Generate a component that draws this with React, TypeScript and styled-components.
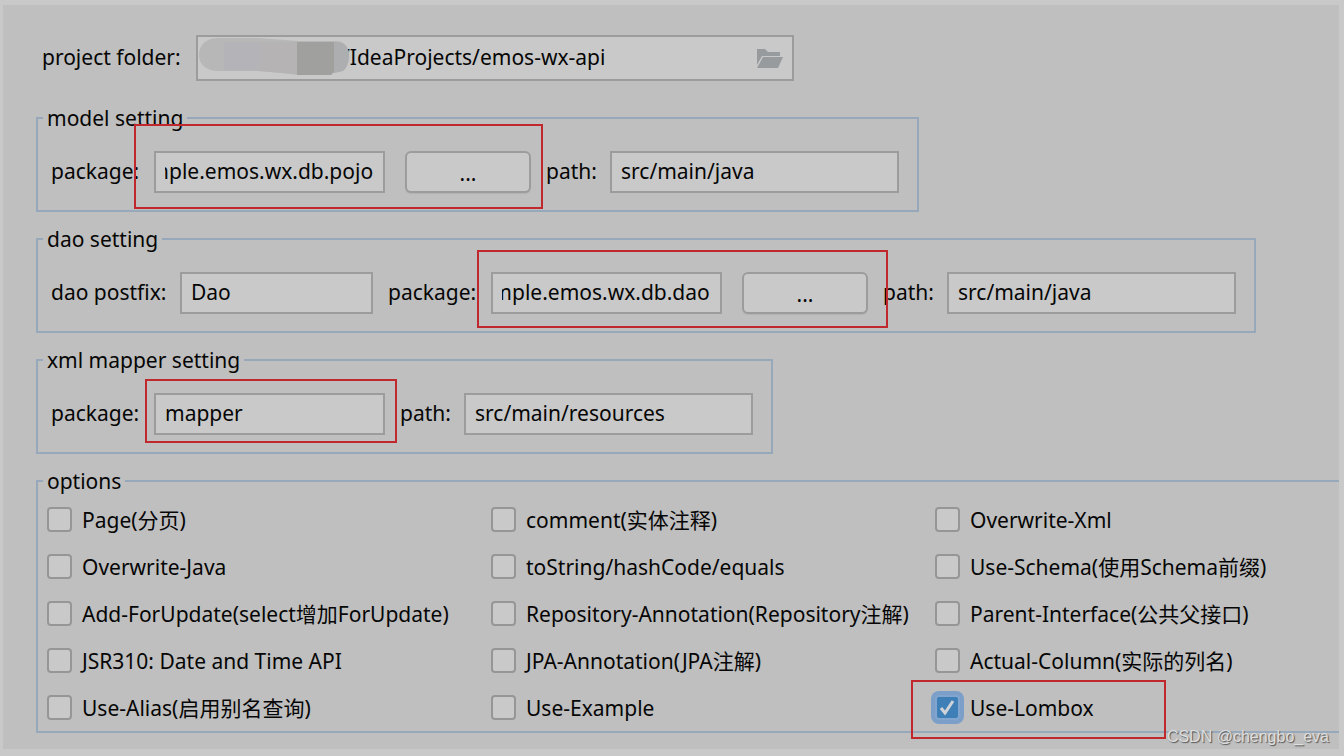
import React, { useId, useLayoutEffect, useRef } from "react";
import styled, { createGlobalStyle, css } from "styled-components";

const GlobalStyle = createGlobalStyle`
  *, *::before, *::after { box-sizing: border-box; }
  body {
    margin: 0;
    background: #c9c9c9;
    color: #060606;
    font-family: "Noto Sans", "Noto Sans CJK SC", sans-serif;
    font-size: 21px;
    line-height: 28px;
    overflow-x: hidden;
  }
  input, button { font: inherit; color: inherit; }
`;

const Page = styled.main`
  padding: 5px 5px 7px 3px;
`;

const Panel = styled.form`
  display: flex;
  flex-direction: column;
  gap: 13px;
  padding: 30px 0 16px 33px;
  background: #bfbfbf;
  overflow: hidden;
`;

const FolderRow = styled.div`
  display: flex;
  align-items: center;
  gap: 14px;
  padding-left: 6px;
  margin-bottom: 10px;
`;

const FieldLabel = styled.label<{ $width: number }>`
  flex: none;
  width: ${(p) => p.$width}px;
  padding-bottom: 2px;
  white-space: nowrap;
`;

const TextInput = styled.input<{ $width: number }>`
  flex: none;
  width: ${(p) => p.$width}px;
  height: 42px;
  padding: 0 10px 2px 9px;
  border: 2px solid #9c9c9c;
  border-radius: 0;
  background: #c9c9c9;
  outline: none;
`;

const FolderBox = styled.div`
  position: relative;
  display: flex;
  align-items: center;
  width: 598px;
  height: 46px;
  border: 2px solid #9c9c9c;
  background: #c9c9c9;
`;

const FolderInput = styled.input`
  flex: 1;
  min-width: 0;
  height: 100%;
  padding: 0 0 2px 144px;
  border: 0;
  background: none;
  outline: none;
`;

const BrowseButton = styled.button`
  display: flex;
  padding: 0;
  margin: 2px 8px 0 0;
  border: 0;
  background: none;
`;

const Redaction = styled.svg`
  position: absolute;
  left: 0;
  top: 0;
  pointer-events: none;
`;

const Group = styled.fieldset<{ $open?: boolean }>`
  margin: 0;
  min-width: 0;
  border: 2px solid #98a8bb;
  ${(p) =>
    p.$open
      ? css`
          padding: 1px 0 0 9px;
          border-right: 0;
        `
      : css`
          width: fit-content;
          padding: 19px 18px 17px 13px;
        `}
`;

const Legend = styled.legend<{ $open?: boolean }>`
  margin-left: ${(p) => (p.$open ? -4 : -8)}px;
  padding: 0 4px;
`;

const FieldRow = styled.div`
  display: flex;
  align-items: center;
  gap: 15px;
`;

const Marked = styled.div`
  position: relative;
  display: flex;
  gap: 20px;
`;

const Mark = styled.span<{ $inset: string }>`
  position: absolute;
  inset: ${(p) => p.$inset};
  border: 2px solid #c0282d;
  pointer-events: none;
  z-index: 1;
`;

const DotsButton = styled.button`
  width: 126px;
  height: 42px;
  padding: 2px 0 0;
  border: 2px solid #9c9c9c;
  border-radius: 6px;
  background: #c9c9c9;
  box-shadow: 0 1px 1px #b2b2b2;
`;

const OptionGrid = styled.div`
  display: grid;
  grid-template-columns: repeat(3, minmax(444px, 1fr));
  grid-auto-rows: 47px;
`;

const OptionCell = styled.div`
  display: flex;
  align-items: center;
`;

const OptionLabel = styled.label`
  position: relative;
  display: flex;
  align-items: center;
  gap: 10px;
  white-space: nowrap;
`;

const BoxWrap = styled.span`
  display: grid;
  width: 25px;
  height: 25px;
  & > * { grid-area: 1 / 1; }
`;

const CheckInput = styled.input`
  appearance: none;
  width: 25px;
  height: 25px;
  margin: 0;
  border: 2px solid #969696;
  border-radius: 4px;
  background: #c9c9c9;
  &:checked {
    border-color: #82a5cd;
    background: #3f7fb8;
    box-shadow: 0 0 0 4px #7b9fc9;
  }
`;

const Tick = styled.svg`
  display: none;
  pointer-events: none;
  z-index: 1;
  input:checked + & { display: block; }
`;

const Watermark = styled.div`
  position: absolute;
  right: 15px;
  top: 726px;
  font-family: "Liberation Sans", sans-serif;
  font-size: 16px;
  line-height: 22px;
  color: #dedede;
  text-shadow: 1px 1px 1px #555;
`;

type FieldProps = { label: string; value: string; labelWidth: number; width: number };

function Field({ label, value, labelWidth, width }: FieldProps) {
  const id = useId();
  return (
    <>
      <FieldLabel $width={labelWidth} htmlFor={id}>{label}</FieldLabel>
      <TextInput $width={width} id={id} defaultValue={value} />
    </>
  );
}

type PackageProps = { value: string; inset: string; browse?: boolean };

function PackageField({ value, inset, browse }: PackageProps) {
  const id = useId();
  const ref = useRef<HTMLInputElement>(null);
  // Long package names show their tail, the part that differs between projects.
  useLayoutEffect(() => {
    if (ref.current) ref.current.scrollLeft = ref.current.scrollWidth;
  }, []);
  return (
    <>
      <FieldLabel $width={88} htmlFor={id}>package:</FieldLabel>
      <Marked>
        <TextInput $width={231} id={id} ref={ref} defaultValue={value} />
        {browse && <DotsButton type="button">...</DotsButton>}
        <Mark $inset={inset} />
      </Marked>
    </>
  );
}

const options: string[] = [
  "Page(分页)", "comment(实体注释)", "Overwrite-Xml",
  "Overwrite-Java", "toString/hashCode/equals", "Use-Schema(使用Schema前缀)",
  "Add-ForUpdate(select增加ForUpdate)", "Repository-Annotation(Repository注解)", "Parent-Interface(公共父接口)",
  "JSR310: Date and Time API", "JPA-Annotation(JPA注解)", "Actual-Column(实际的列名)",
  "Use-Alias(启用别名查询)", "Use-Example", "Use-Lombox",
];

export default function App() {
  return (
    <Page>
      <GlobalStyle />
      <Panel>
        <FolderRow>
          <FieldLabel $width={140} htmlFor="folder">project folder:</FieldLabel>
          <FolderBox>
            <FolderInput id="folder" defaultValue="/IdeaProjects/emos-wx-api" />
            <Redaction width="154" height="42" viewBox="0 0 154 42">
              <path d="M20 1H60L100 4H138C146 4 151 10 151 18C151 26 148 32 144 34L136 36L100 38L84 36L60 34H20C8 34 1 27 1 18C1 8 8 1 20 1Z" fill="#b7b7b8" />
              <path d="M26 5H62V34H26Z" fill="#b3b3b8" />
              <path d="M62 5H99V37L84 36L62 34Z" fill="#b5b3b4" />
              <path d="M99 5H136V35L133 38H99Z" fill="#a0a09e" />
              <path d="M136 5C146 4 151 10 151 18C151 26 148 32 145 34L136 36Z" fill="#adaeb0" />
            </Redaction>
            <BrowseButton type="button" aria-label="Browse">
              <svg width="28" height="20" viewBox="0 0 28 20" fill="#979b9e">
                <path d="M1 0H9L12 3H24V7H6L1 16Z" />
                <path d="M7 8H27L22 19H1Z" />
              </svg>
            </BrowseButton>
          </FolderBox>
        </FolderRow>

        <Group>
          <Legend>model setting</Legend>
          <FieldRow>
            <PackageField value="com.example.emos.wx.db.pojo" browse inset="-27px -12px -16px -20px" />
            <Field label="path:" value="src/main/java" labelWidth={49} width={289} />
          </FieldRow>
        </Group>

        <Group>
          <Legend>dao setting</Legend>
          <FieldRow>
            <Field label="dao postfix:" value="Dao" labelWidth={114} width={193} />
            <PackageField value="com.example.emos.wx.db.dao" browse inset="-22px -20px -14px -14px" />
            <Field label="path:" value="src/main/java" labelWidth={49} width={289} />
          </FieldRow>
        </Group>

        <Group>
          <Legend>xml mapper setting</Legend>
          <FieldRow>
            <PackageField value="mapper" inset="-14px -12px -8px -9px" />
            <Field label="path:" value="src/main/resources" labelWidth={49} width={289} />
          </FieldRow>
        </Group>

        <Group $open>
          <Legend $open>options</Legend>
          <OptionGrid>
            {options.map((name) => {
              const marked = name === "Use-Lombox";
              return (
                <OptionCell key={name}>
                  <OptionLabel>
                    <BoxWrap>
                      <CheckInput type="checkbox" defaultChecked={marked} />
                      <Tick width="25" height="25" viewBox="0 0 25 25" fill="none" stroke="#cfd3d7" strokeWidth="3">
                        <path d="M6 13L10 18L18 6" />
                      </Tick>
                    </BoxWrap>
                    {name}
                    {marked && <Mark $inset="-14px -72px -17px -24px" />}
                  </OptionLabel>
                </OptionCell>
              );
            })}
          </OptionGrid>
        </Group>
      </Panel>
      <Watermark>CSDN @chengbo_eva</Watermark>
    </Page>
  );
}
